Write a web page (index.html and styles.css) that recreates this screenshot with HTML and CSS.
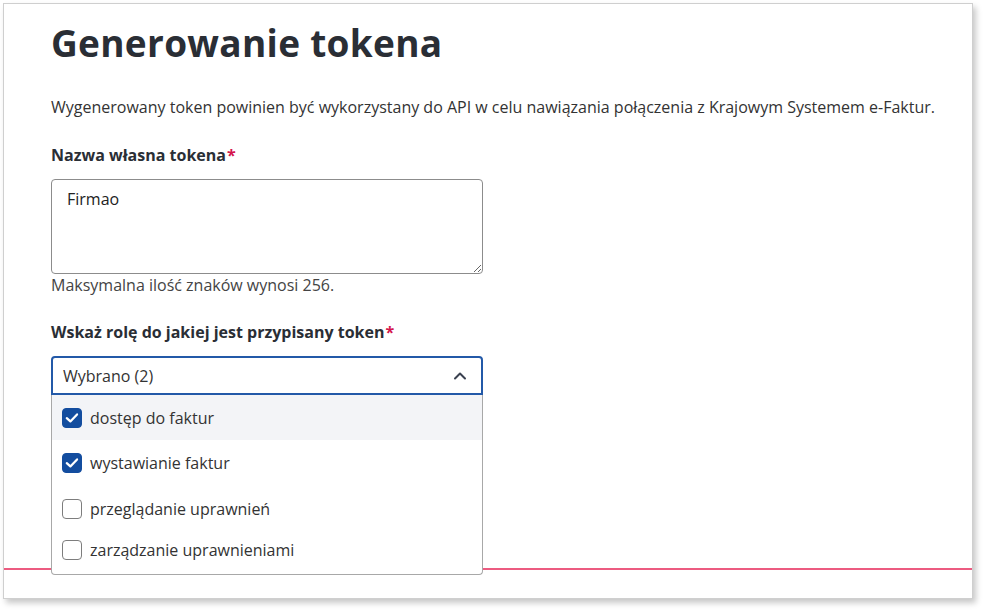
FILE: index.html
```html
<!DOCTYPE html>
<html lang="pl">
<head>
<meta charset="utf-8">
<title>Generowanie tokena</title>
<link rel="stylesheet" href="styles.css">
</head>
<body>
<div class="card">
  <div class="content">
    <h1 class="title">Generowanie tokena</h1>
    <p class="desc">Wygenerowany token powinien być wykorzystany do API w celu nawiązania połączenia z Krajowym Systemem e-Faktur.</p>

    <div class="field">
      <label class="label">Nazwa własna tokena<span class="req">*</span></label>
      <textarea class="textarea">Firmao</textarea>
      <div class="hint">Maksymalna ilość znaków wynosi 256.</div>
    </div>

    <div class="field field-role">
      <label class="label">Wskaż rolę do jakiej jest przypisany token<span class="req">*</span></label>
      <div class="select-wrap">
        <div class="select">
          <span>Wybrano (2)</span>
          <svg class="chev" width="14" height="9" viewBox="0 0 14 9"><path d="M2 7.5 L7 2.5 L12 7.5" fill="none" stroke="#3a4150" stroke-width="2" stroke-linecap="round" stroke-linejoin="round"/></svg>
        </div>
        <ul class="menu">
          <li class="opt hover"><span class="cb checked"><svg width="20" height="20" viewBox="0 0 20 20"><path d="M4.2 10.2 L8.2 13.8 L15.6 6" fill="none" stroke="#fff" stroke-width="2.5" stroke-linecap="round" stroke-linejoin="round"/></svg></span>dostęp do faktur</li>
          <li class="opt"><span class="cb checked"><svg width="20" height="20" viewBox="0 0 20 20"><path d="M4.2 10.2 L8.2 13.8 L15.6 6" fill="none" stroke="#fff" stroke-width="2.5" stroke-linecap="round" stroke-linejoin="round"/></svg></span>wystawianie faktur</li>
          <li class="opt"><span class="cb"></span>przeglądanie uprawnień</li>
          <li class="opt last"><span class="cb"></span>zarządzanie uprawnieniami</li>
        </ul>
      </div>
    </div>
  </div>
  <div class="footer-line"></div>
</div>
</body>
</html>
```

FILE: styles.css
```css
* { box-sizing: border-box; }
html, body { margin: 0; padding: 0; background: #ffffff; }
body {
  font-family: "Open Sans", "Noto Sans", sans-serif;
  color: #333;
  width: 984px;
  height: 610px;
  overflow: hidden;
}
.card {
  margin: 3px 0 0 3px;
  width: 970px;
  height: 596px;
  background: #fff;
  border: 1px solid #cfcfcf;
  box-shadow: 3px 4px 6px rgba(0,0,0,0.22);
  display: flex;
  flex-direction: column;
}
.content {
  padding: 0 0 0 47px;
  flex: 1;
}
.title {
  margin: 15px 0 0 0;
  font-family: "Open Sans", sans-serif;
  font-weight: 700;
  font-size: 37px;
  line-height: 48px;
  letter-spacing: 0.3px;
  color: #2a2e35;
}
.desc {
  margin: 29px 0 0 0;
  font-size: 16px;
  line-height: 22px;
  color: #333;
}
.field { margin-top: 26px; }
.label {
  display: block;
  font-weight: 700;
  font-size: 16px;
  line-height: 22px;
  color: #2a2e35;
}
.req { color: #d4154c; margin-left: 1px; }
.textarea {
  display: block;
  margin-top: 13px;
  width: 432px;
  height: 95px;
  border: 1px solid #8c8c8c;
  border-radius: 4px;
  padding: 8px 15px;
  font-family: "Open Sans", sans-serif;
  font-size: 16px;
  line-height: 22px;
  color: #222;
  resize: vertical;
  outline: none;
}
.hint {
  margin-top: 0;
  font-size: 16px;
  line-height: 22px;
  color: #444;
}
.field-role { margin-top: 25px; }
.select-wrap {
  position: relative;
  margin-top: 13px;
  width: 432px;
}
.select {
  height: 39px;
  border: 2px solid #2359a8;
  border-radius: 4px 4px 0 0;
  padding: 0 10px;
  display: flex;
  align-items: center;
  justify-content: space-between;
  font-size: 16px;
  color: #333;
}
.chev { margin-right: 4px; }
.menu {
  position: absolute;
  left: 0;
  top: 39px;
  width: 432px;
  margin: 0;
  padding: 0;
  list-style: none;
  background: #fff;
  border: 1px solid #a8a8a8;
  border-top: none;
  border-radius: 0 0 4px 4px;
  z-index: 2;
}
.opt {
  height: 46px;
  display: flex;
  align-items: center;
  padding-left: 10px;
  font-size: 16px;
  color: #333;
}
.opt.hover { background: #f3f4f7; height: 45px; }
.opt.last { height: 42px; padding-bottom: 6px; }
.cb {
  width: 20px;
  height: 20px;
  border: 1.5px solid #7d7d7d;
  border-radius: 4px;
  margin-right: 8px;
  background: #fff;
  display: flex;
  align-items: center;
  justify-content: center;
  flex: none;
}
.cb.checked {
  background: #134d9f;
  border-color: #134d9f;
}
.cb svg { display: block; }
.footer-line {
  height: 2px;
  background: #ec5b80;
  margin-bottom: 28px;
}
```
